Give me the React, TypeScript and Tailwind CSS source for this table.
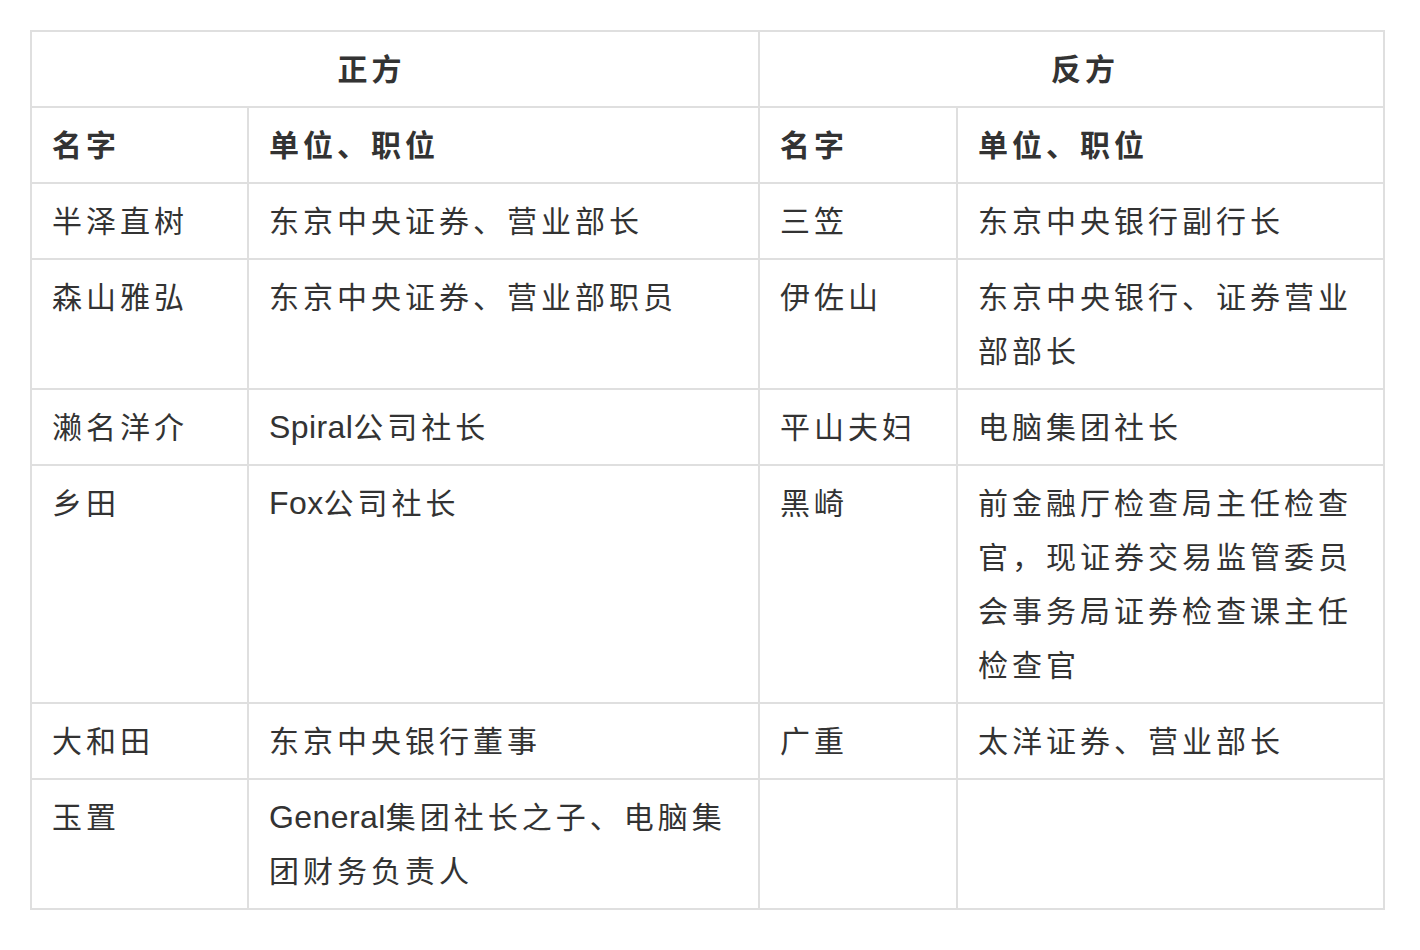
import React from "react";

type Row = [string, string, string, string];

const rows: Row[] = [
  ["半泽直树", "东京中央证券、营业部长", "三笠", "东京中央银行副行长"],
  ["森山雅弘", "东京中央证券、营业部职员", "伊佐山", "东京中央银行、证券营业部部长"],
  ["濑名洋介", "Spiral公司社长", "平山夫妇", "电脑集团社长"],
  ["乡田", "Fox公司社长", "黑崎", "前金融厅检查局主任检查官，现证券交易监管委员会事务局证券检查课主任检查官"],
  ["大和田", "东京中央银行董事", "广重", "太洋证券、营业部长"],
  ["玉置", "General集团社长之子、电脑集团财务负责人", "", ""],
];

const cell =
  "border-2 border-[#dfdfdf] px-[20px] pt-[8px] pb-[12px] align-top text-left";

function Text({ s }: { s: string }) {
  const parts = s.split(/([A-Za-z]+)/).filter((p) => p.length > 0);
  return (
    <>
      {parts.map((p, i) =>
        /^[A-Za-z]+$/.test(p) ? (
          <span
            key={i}
            className="text-[32px] leading-none tracking-[0.4px]"
            style={{ fontFamily: '"Liberation Sans", "Noto Sans CJK SC", sans-serif' }}
          >
            {p}
          </span>
        ) : (
          <span key={i}>{p}</span>
        )
      )}
    </>
  );
}

export default function App() {
  return (
    <div
      className="bg-white min-h-[950px] pt-[30px] pl-[30px] text-[#333333] text-[30px] leading-[54px] tracking-[4px]"
      style={{ fontFamily: '"Noto Sans CJK SC", "Noto Sans", sans-serif' }}
    >
      <table className="table-fixed border-collapse w-[1353px]">
        <colgroup>
          <col className="w-[217px]" />
          <col className="w-[511px]" />
          <col className="w-[198px]" />
          <col className="w-[427px]" />
        </colgroup>
        <thead>
          <tr>
            <th
              colSpan={2}
              className="border-2 border-[#dfdfdf] pl-[20px] pr-[67px] pt-[8px] pb-[12px] align-top text-center font-bold"
            >
              正方
            </th>
            <th
              colSpan={2}
              className="border-2 border-[#dfdfdf] pl-[47px] pr-[20px] pt-[8px] pb-[12px] align-top text-center font-bold"
            >
              反方
            </th>
          </tr>
          <tr>
            <th className={cell + " font-bold"}>名字</th>
            <th className={cell + " font-bold"}>单位、职位</th>
            <th className={cell + " font-bold"}>名字</th>
            <th className={cell + " font-bold"}>单位、职位</th>
          </tr>
        </thead>
        <tbody>
          {rows.map((r, i) => (
            <tr key={i}>
              {r.map((c, j) => (
                <td key={j} className={cell + " font-normal"}>
                  <Text s={c} />
                </td>
              ))}
            </tr>
          ))}
        </tbody>
      </table>
    </div>
  );
}
